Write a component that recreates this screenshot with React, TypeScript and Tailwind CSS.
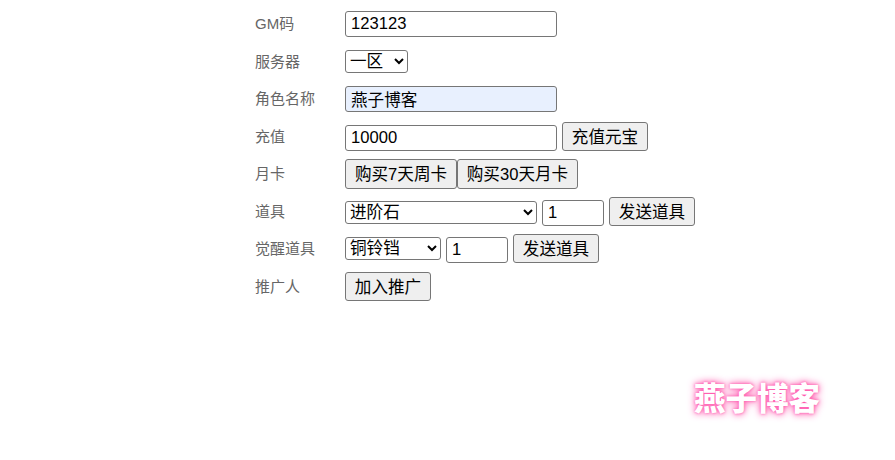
const font = "font-['Liberation_Sans','Noto_Sans_CJK_SC',sans-serif]";
const inputCls = `h-[26px] rounded-[3px] border border-[#767676] px-[5px] text-[16.6px] text-black ${font}`;
const selectCls = `h-[23px] rounded-[3px] border border-[#767676] bg-white text-[16.6px] text-black ${font}`;
const btnCls = `h-[29px] rounded-[3px] border border-[#767676] bg-[#efefef] px-[8px] pt-[3px] text-[16.6px] text-black whitespace-nowrap ${font}`;

function Row({ label, children }: { label: string; children: React.ReactNode }) {
  return (
    <div className="flex h-[37.5px] items-center">
      <label className={`w-[90px] shrink-0 pt-[1px] text-[15px] text-[#666666] ${font}`}>{label}</label>
      <div className="flex items-end">{children}</div>
    </div>
  );
}

export default function App() {
  return (
    <div className={`relative h-[460px] w-[895px] overflow-hidden bg-white ${font}`}>
      <form className="ml-[255px] pt-[5px]">
        <Row label="GM码">
          <input className={`${inputCls} w-[212px] bg-white`} defaultValue="123123" />
        </Row>
        <Row label="服务器">
          <select className={`${selectCls} w-[63px]`}>
            <option>一区</option>
          </select>
        </Row>
        <Row label="角色名称">
          <input className={`${inputCls} w-[212px] bg-[#e8f0fe]`} defaultValue="燕子博客" />
        </Row>
        <Row label="充值">
          <input className={`${inputCls} w-[212px] bg-white`} defaultValue="10000" />
          <button type="button" className={`${btnCls} ml-[5px] w-[86px]`}>充值元宝</button>
        </Row>
        <Row label="月卡">
          <button type="button" className={`${btnCls} h-[30px] w-[112px]`}>购买7天周卡</button>
          <button type="button" className={`${btnCls} h-[30px] w-[121px]`}>购买30天月卡</button>
        </Row>
        <Row label="道具">
          <select className={`${selectCls} mb-[2px] w-[192px]`}>
            <option>进阶石</option>
          </select>
          <input className={`${inputCls} ml-[5px] w-[62px] bg-white`} defaultValue="1" />
          <button type="button" className={`${btnCls} ml-[5px] w-[86px]`}>发送道具</button>
        </Row>
        <Row label="觉醒道具">
          <select className={`${selectCls} mb-[3px] w-[96px]`}>
            <option>铜铃铛</option>
          </select>
          <input className={`${inputCls} ml-[5px] w-[62px] bg-white`} defaultValue="1" />
          <button type="button" className={`${btnCls} ml-[5px] w-[86px]`}>发送道具</button>
        </Row>
        <Row label="推广人">
          <button type="button" className={`${btnCls} w-[86px]`}>加入推广</button>
        </Row>
      </form>
      <div className="absolute left-[694px] top-[379px] text-[31.5px] leading-[40px] font-black whitespace-nowrap text-white [text-shadow:0_0_3px_#ff4fa8,0_0_7px_#ff6ab8,0_0_10px_#ffa0d0]">
        燕子博客
      </div>
    </div>
  );
}
